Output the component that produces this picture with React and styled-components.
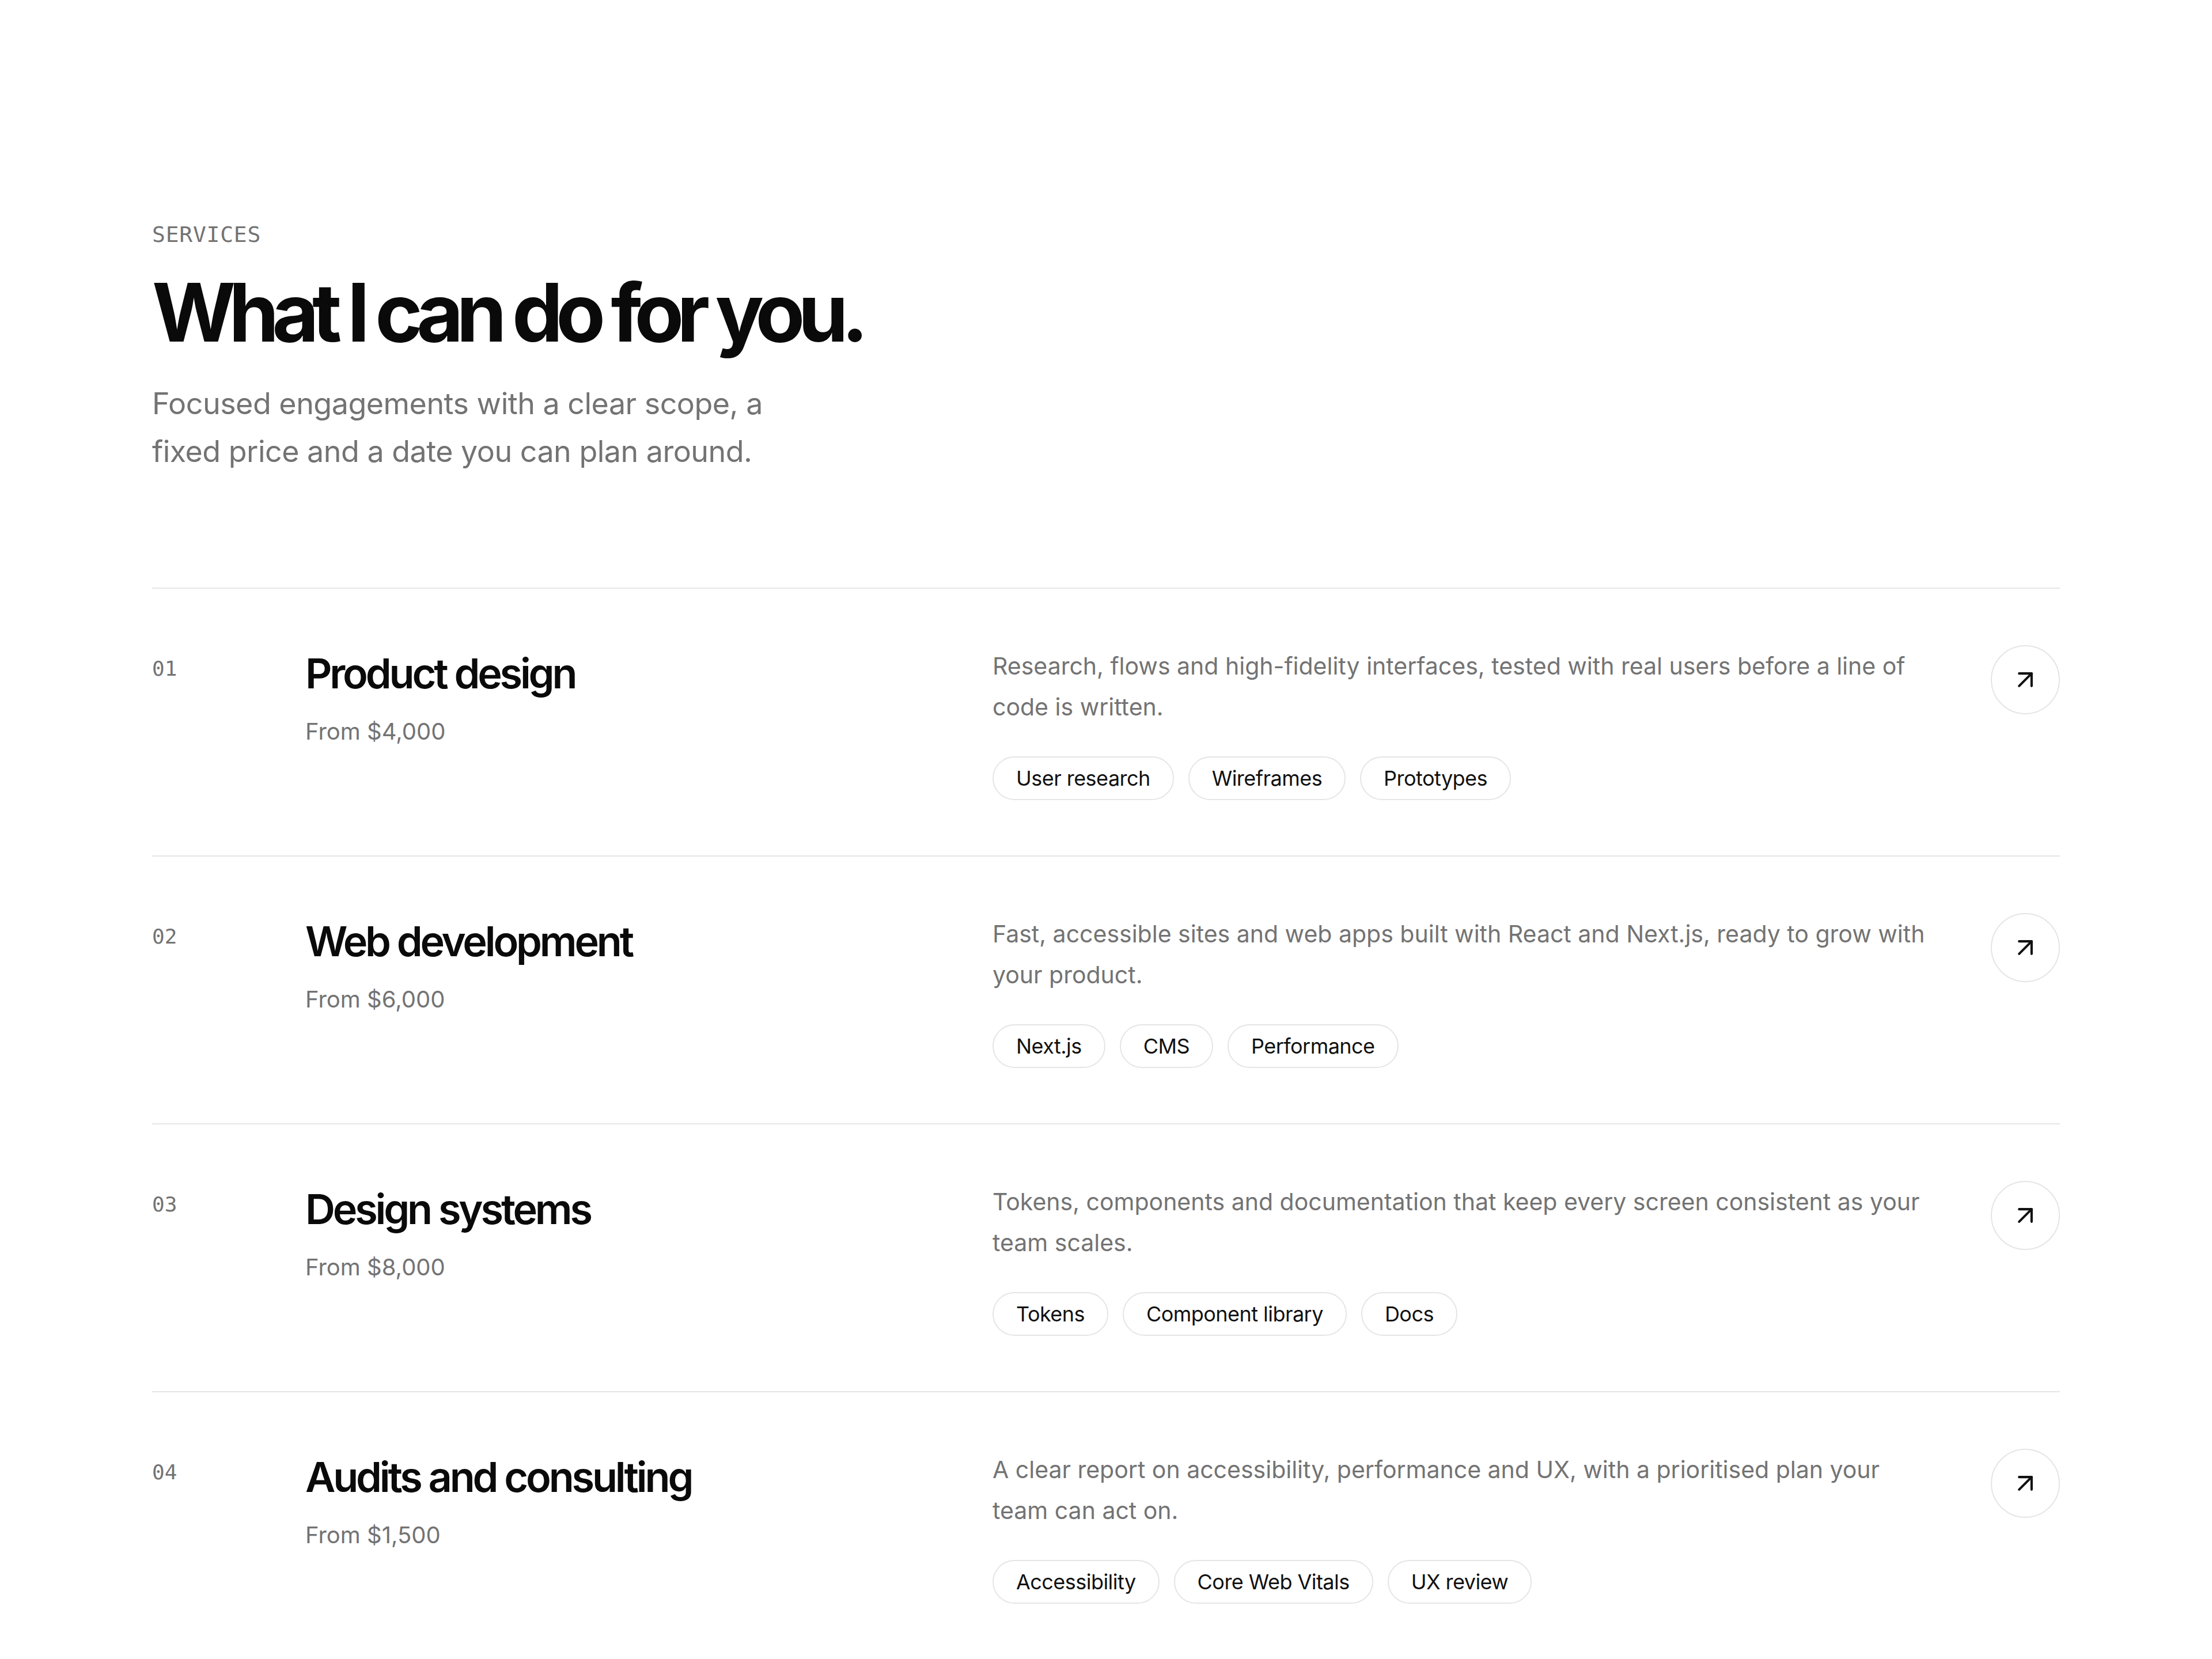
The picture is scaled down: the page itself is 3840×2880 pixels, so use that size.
import React from 'react'
import styled, { createGlobalStyle } from 'styled-components'
import { ArrowUpRight } from 'lucide-react'

const GlobalStyle = createGlobalStyle`
  * { box-sizing: border-box; }
  html, body {
    margin: 0;
    padding: 0;
    background: #ffffff;
    font-family: Inter, "Noto Sans", "Liberation Sans", sans-serif;
    color: #0a0a0a;
  }
`

const Section = styled.section`
  padding: 381px 264px 0;
`

const Eyebrow = styled.div`
  font-family: "DejaVu Sans Mono", "Liberation Mono", monospace;
  font-size: 38px;
  line-height: 1.4;
  letter-spacing: 0.02em;
  color: #737373;
`

const Heading = styled.h2`
  margin: 35px 0 0;
  font-size: 140px;
  font-weight: 700;
  line-height: 1.05;
  letter-spacing: -0.085em;
  color: #0a0a0a;
`

const Lead = styled.p`
  margin: 43px 0 0;
  max-width: 1120px;
  font-size: 52px;
  line-height: 83px;
  letter-spacing: -0.01em;
  color: #737373;
`

const List = styled.div`
  margin-top: 195px;
`

const Row = styled.article`
  display: grid;
  grid-template-columns: 266px 1193px minmax(0, 1fr) 120px;
  align-items: start;
  padding: 92px 0 96px;
  border-top: 2px solid #e5e5e5;
`

const Index = styled.span`
  margin-top: 22px;
  font-family: "DejaVu Sans Mono", "Liberation Mono", monospace;
  font-size: 36px;
  line-height: 1.4;
  color: #737373;
`

const TitleBlock = styled.div`
  margin-top: 12px;
`

const Title = styled.h3`
  margin: 0;
  font-size: 72px;
  font-weight: 600;
  line-height: 1.2;
  letter-spacing: -0.058em;
  color: #0a0a0a;
`

const Price = styled.div`
  margin-top: 27px;
  font-size: 40px;
  line-height: 1.5;
  color: #737373;
`

const Body = styled.div`
  padding-top: 7px;
  padding-right: 98px;
`

const Description = styled.p`
  margin: 0;
  font-size: 41px;
  line-height: 71px;
  color: #737373;
`

const Tags = styled.ul`
  display: flex;
  flex-wrap: wrap;
  gap: 25px;
  margin: 50px 0 0;
  padding: 0;
  list-style: none;
`

const Tag = styled.li`
  display: inline-flex;
  align-items: center;
  height: 76px;
  padding: 0 39px;
  border: 2px solid #e5e5e5;
  border-radius: 999px;
  font-size: 36px;
  letter-spacing: -0.015em;
  color: #111111;
  background: #ffffff;
`

const ArrowButton = styled.button`
  margin-top: 6px;
  width: 120px;
  height: 120px;
  display: flex;
  align-items: center;
  justify-content: center;
  padding: 0;
  border: 2px solid #e5e5e5;
  border-radius: 50%;
  background: #ffffff;
  color: #111111;
  cursor: pointer;
`

const services = [
  {
    id: '01',
    title: 'Product design',
    price: 'From $4,000',
    text: 'Research, flows and high-fidelity interfaces, tested with real users before a line of code is written.',
    tags: ['User research', 'Wireframes', 'Prototypes'],
  },
  {
    id: '02',
    title: 'Web development',
    price: 'From $6,000',
    text: 'Fast, accessible sites and web apps built with React and Next.js, ready to grow with your product.',
    tags: ['Next.js', 'CMS', 'Performance'],
  },
  {
    id: '03',
    title: 'Design systems',
    price: 'From $8,000',
    text: 'Tokens, components and documentation that keep every screen consistent as your team scales.',
    tags: ['Tokens', 'Component library', 'Docs'],
  },
  {
    id: '04',
    title: 'Audits and consulting',
    price: 'From $1,500',
    text: 'A clear report on accessibility, performance and UX, with a prioritised plan your team can act on.',
    tags: ['Accessibility', 'Core Web Vitals', 'UX review'],
  },
]

function ServiceRow({ service }) {
  return (
    <Row>
      <Index>{service.id}</Index>
      <TitleBlock>
        <Title>{service.title}</Title>
        <Price>{service.price}</Price>
      </TitleBlock>
      <Body>
        <Description>{service.text}</Description>
        <Tags>
          {service.tags.map((t) => (
            <Tag key={t}>{t}</Tag>
          ))}
        </Tags>
      </Body>
      <ArrowButton aria-label={`About ${service.title}`}>
        <ArrowUpRight size={52} strokeWidth={1.9} />
      </ArrowButton>
    </Row>
  )
}

export default function App() {
  return (
    <>
      <GlobalStyle />
      <Section>
        <Eyebrow>SERVICES</Eyebrow>
        <Heading>What I can do for you.</Heading>
        <Lead>Focused engagements with a clear scope, a fixed price and a date you can plan around.</Lead>
        <List>
          {services.map((s) => (
            <ServiceRow key={s.id} service={s} />
          ))}
        </List>
      </Section>
    </>
  )
}
